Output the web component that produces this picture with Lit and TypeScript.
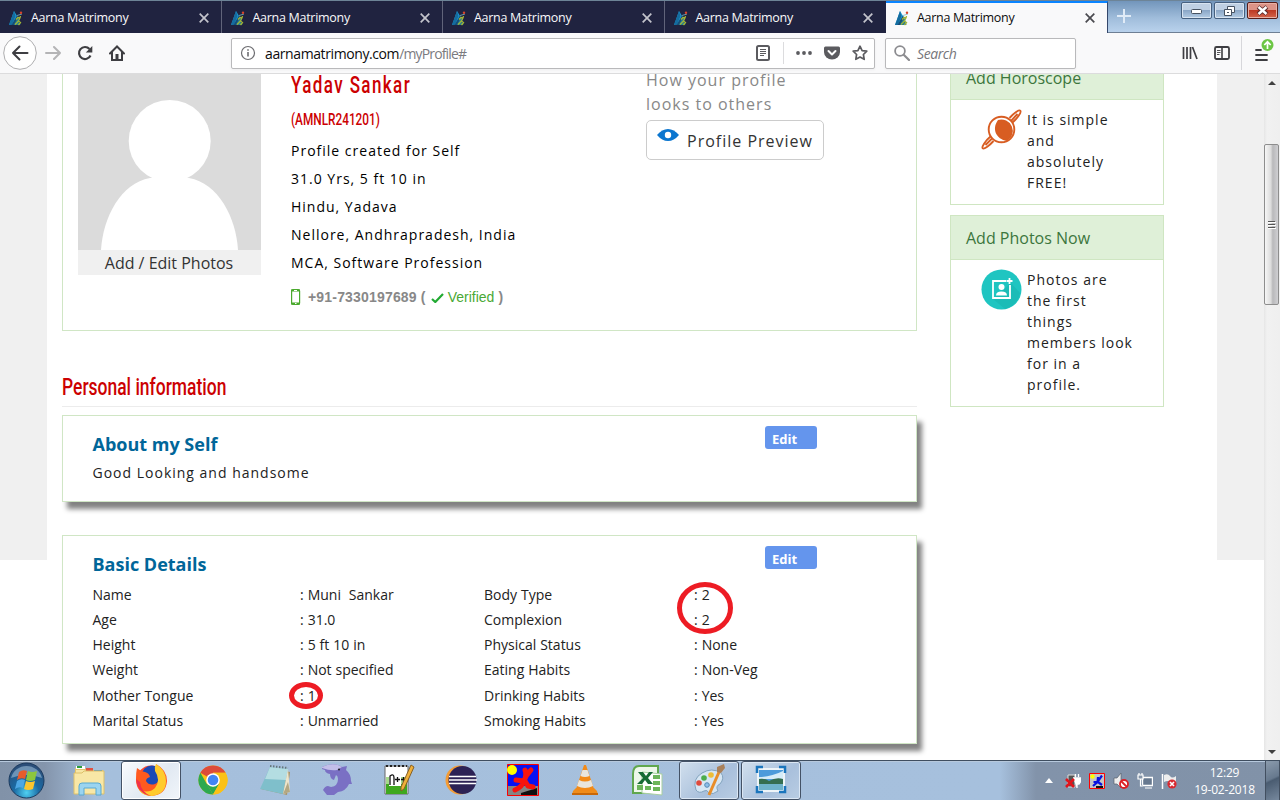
import { LitElement, html, css, svg } from "lit";
import { customElement, property } from "lit/decorators.js";

const logo = html`<svg width="16" height="16" viewBox="0 0 16 16">
  <path d="M6 1 11.500 10 9 15H1z" fill="#1b9ad6"/><path d="M6 1 1 15h3l3.500-9z" fill="#156c9e"/>
  <path d="M3.500 15 9 5.500 12.500 15z" fill="#164d78"/><path d="M6 15 9.500 8l2.500 7z" fill="#2b7f8c"/>
  <path d="M8 9.500 10 7.500l2.500.5M12.500 6Q12 10 7 14.500M10.500 11l2 1.500-2 2.500" stroke="#a2b535" stroke-width="1.300" fill="none"/>
  <path d="M9 5.500 14 4" stroke="#7fb7c0" stroke-width=".8"/>
  <circle cx="13" cy="2.800" r="1.200" fill="#d8442b"/></svg>`;

const sheet = css`
  :host { display: block; box-sizing: border-box; }
  * { box-sizing: border-box; }
  svg { display: block; flex: none; }
`;

@customElement("browser-tabs")
class BrowserTabs extends LitElement {
  static styles = [sheet, css`
    :host { display: flex; height: 33px; border-top: 1px solid #6d8497; background: #202340; font: 12.500px/16px "Open Sans", sans-serif; }
    .tab { width: 221.500px; flex: none; display: flex; align-items: center; padding: 1px 12px 0 8px; border-right: 1px solid #61647a; color: #f9f9fa; }
    .tab.last { border-right-color: #202340; }
    .tab.active { background: #f9f9fa; color: #0c0c0d; border-top: 2px solid #0a84ff; border-right: 1px solid #34476b; padding-top: 0; padding-bottom: 1px; }
    .name { flex: 1; margin-left: 7px; letter-spacing: -0.290px; }
    .aero { flex: 1; display: flex; background: linear-gradient(#7295bb, #a0bddb 55%, #b9d2ec); border-bottom: 1px solid #6e7f94; padding: 1px 2px 0 8px; }
    .plus { margin-top: 6px; margin-right: auto; }
    .win { width: 31px; height: 17px; margin-left: 2px; border: 1px solid #46607f; border-radius: 2px; background: linear-gradient(#bfd0e3 45%, #8ba7c7 50%, #b4cce4); box-shadow: inset 0 0 0 1px #d8e4f1; display: grid; place-items: center; }
    .close { border-color: #571d18; background: linear-gradient(#dc9387 45%, #bd3a24 50%, #d4664c); box-shadow: inset 0 0 0 1px #e9b1a5; }
  `];
  render() {
    return html`${[0, 1, 2, 3, 4].map((i) => html`<div class="tab ${i === 4 ? "active" : i === 3 ? "last" : ""}">
      ${logo}<span class="name">Aarna Matrimony</span>
      <svg width="10" height="10" viewBox="0 0 10 10"><path d="M.7.7 9.300 9.300M9.300.7.7 9.300" stroke=${i === 4 ? "#4a4a4f" : "#c3c4cc"} stroke-width="1.700"/></svg></div>`)}
      <div class="aero">
        <svg class="plus" width="16" height="16" viewBox="0 0 16 16"><path d="M8 1v14M1 8h14" stroke="#e0ebf7" stroke-width="2"/></svg>
        <div class="win"><svg width="13" height="9"><rect x="1.500" y="3.500" width="10" height="4" rx="1" fill="#fff" stroke="#475261"/></svg></div>
        <div class="win"><svg width="14" height="12"><path d="M4.500 1.500h7v6h-7z" fill="#fff" stroke="#475261"/><path d="M1.500 4.500h7v6h-7z" fill="#fff" stroke="#475261"/><path d="M4 7h2v1H4z" fill="#475261"/></svg></div>
        <div class="win close"><svg width="13" height="11"><path d="M2 2l9 7M11 2l-9 7" stroke="#5b2b2b" stroke-width="4.200"/><path d="M2.500 2l8 7M10.500 2l-8 7" stroke="#fff" stroke-width="2.400"/></svg></div>
      </div>`;
  }
}

@customElement("browser-toolbar")
class BrowserToolbar extends LitElement {
  static styles = [sheet, css`
    :host { display: flex; align-items: center; height: 41px; padding: 0 12px 0 3px; background: #f9f9fa; border-bottom: 1px solid #dcdcdd; font: 14px/20px "Open Sans", sans-serif; }
    .nav { display: flex; align-items: center; width: 228px; gap: 8px; }
    .spaced { margin-left: 8px; }
    .field { height: 31px; border: 1px solid #b9b9bb; border-radius: 2px; background: #fff; display: flex; align-items: center; box-shadow: 0 1px 3px #0000000c; }
    .url { width: 644px; padding: 0 6px 0 8px; }
    .addr { margin-left: 9px; flex: 1; color: #7b7b7f; white-space: nowrap; letter-spacing: -0.850px; padding-top: 1px; }
    .addr b { font-weight: 400; color: #0c0c0d; letter-spacing: -0.400px; }
    .line { width: 1px; height: 22px; background: #dcdcde; margin: 0 12px; }
    .search { width: 191px; margin-left: 10px; padding-left: 8px; }
    .search i { margin-left: 7px; color: #76767a; letter-spacing: -0.400px; padding-top: 1px; }
    .right { display: flex; align-items: center; margin-left: auto; }
    .sep { width: 1px; height: 34px; background: #d7d7db; margin: 0 8px 0 11px; }
    .menu { margin: -2px -6px 0 0; }
    .gap { margin-left: 12px; }
    .side { margin-left: 16px; }
  `];
  render() {
    return html`<div class="nav">
      <svg width="34" height="34" viewBox="0 0 34 34"><circle cx="17" cy="17" r="16.300" fill="#fff" stroke="#adadaf"/><path d="M24.500 17H10M16.500 10.500 10 17l6.500 6.500" fill="none" stroke="#3e3e42" stroke-width="2" stroke-linecap="round" stroke-linejoin="round"/></svg>
      <svg width="16" height="16" viewBox="0 0 16 16"><path d="M1 8h14M9 2l6 6-6 6" fill="none" stroke="#b4b4b6" stroke-width="2" stroke-linecap="round" stroke-linejoin="round"/></svg>
      <svg class="spaced" width="16" height="16" viewBox="0 0 16 16"><path d="M13.500 10.500A6 6 0 1 1 12.500 4" fill="none" stroke="#3e3e42" stroke-width="2.200"/><path d="M15.300 1v6.500H8.800z" fill="#3e3e42"/></svg>
      <svg class="spaced" width="16" height="16" viewBox="0 0 16 16"><path d="M1 8.500 8 1.500l7 7M3 7v8h10V7" fill="none" stroke="#3e3e42" stroke-width="2" stroke-linecap="round"/><path d="M6.500 9h3v5h-3z" fill="#3e3e42"/></svg>
    </div>
    <div class="field url">
      <svg width="16" height="16" viewBox="0 0 16 16"><circle cx="8" cy="8" r="6.500" fill="none" stroke="#6c6c70" stroke-width="1.200"/><path d="M8 7v4.500M8 4.200v1.600" stroke="#6c6c70" stroke-width="1.600"/></svg>
      <span class="addr"><b>aarnamatrimony.com</b>/myProfile#</span>
      <svg width="16" height="16" viewBox="0 0 16 16"><rect x="2" y="1" width="12" height="14" rx="1.500" fill="none" stroke="#5b5b5f" stroke-width="2"/><path d="M5 4.500h6M5 6.500h6M5 8.500h6M5 10.500h4" stroke="#5b5b5f"/></svg>
      <span class="line"></span>
      <svg width="16" height="16" viewBox="0 0 16 16"><g fill="#5b5b5f"><circle cx="2" cy="8" r="1.900"/><circle cx="8" cy="8" r="1.900"/><circle cx="14" cy="8" r="1.900"/></g></svg>
      <svg class="gap" width="16" height="16" viewBox="0 0 16 16"><path d="M1.500 1.500h13Q16 1.500 16 3v4a8 7.500 0 0 1-16 0V3Q0 1.500 1.500 1.500z" fill="#5b5b5f"/><path d="M4.500 6 8 9.500 11.500 6" fill="none" stroke="#fff" stroke-width="2" stroke-linecap="round" stroke-linejoin="round"/></svg>
      <svg class="gap" width="16" height="16" viewBox="0 0 16 16"><path d="M8 1.200l2.100 4.400 4.700.6-3.400 3.300.8 4.800L8 12l-4.200 2.300.8-4.800L1.200 6.200l4.700-.6z" fill="none" stroke="#5b5b5f" stroke-width="1.700" stroke-linejoin="round"/></svg>
    </div>
    <div class="field search">
      <svg width="16" height="16" viewBox="0 0 16 16"><circle cx="6" cy="6" r="4.900" fill="none" stroke="#8c8c90" stroke-width="1.800"/><path d="M9.700 9.700 15 15" stroke="#8c8c90" stroke-width="2.200" stroke-linecap="round"/></svg><i>Search</i></div>
    <div class="right">
      <svg width="16" height="16" viewBox="0 0 16 16"><path d="M1.500 2v12M5 2v12M8.500 2v12M10.500 2 15 14" stroke="#3e3e42" stroke-width="1.700"/></svg>
      <svg class="side" width="16" height="16" viewBox="0 0 16 16"><rect x="1" y="2" width="14" height="12" rx="1.500" fill="none" stroke="#3e3e42" stroke-width="1.800"/><path d="M8 2v12" stroke="#3e3e42" stroke-width="1.600"/><path d="M3 5.500h3.500M3 7.500h3.500M3 9.500h2.500" stroke="#3e3e42" stroke-width=".9"/></svg>
      <span class="sep"></span>
      <svg class="menu" width="24" height="26" viewBox="0 0 24 26"><path d="M6 11h5M6 16h11M6 21h11" stroke="#3e3e42" stroke-width="1.800" stroke-linecap="round"/><circle cx="17.500" cy="6" r="6" fill="#6cc644"/><path d="M17.500 10V3M14.300 6l3.200-3.200L20.700 6" stroke="#fff" stroke-width="1.700" fill="none"/></svg>
    </div>`;
  }
}

@customElement("side-panel")
class SidePanel extends LitElement {
  @property() heading = "";
  static styles = [sheet, css`
    :host { display: block; width: 214px; border: 1px solid #cfe6c2; background: #fff; margin-bottom: 10px; }
    :host([cut]) { border-top: 0; }
    .head { display: flow-root; height: 44px; padding: 11px 15px; background: #dff0d8; border-bottom: 1px solid #cfe6c2; color: #3c763d; font: 16px/22px "Open Sans", sans-serif; white-space: nowrap; }
    :host([cut]) .head { height: 26px; padding-top: 0; }
    :host([cut]) .head span { display: block; margin-top: -7px; }
    .body { display: flex; padding: 9px 16px 11px 30px; gap: 5px; font: 14px/21px "Open Sans", sans-serif; letter-spacing: 1px; color: #222; }
    .text { white-space: nowrap; }
  `];
  render() {
    return html`<div class="head"><span>${this.heading}</span></div><div class="body"><slot name="icon"></slot><div class="text"><slot></slot></div></div>`;
  }
}

const left = [["Name", "Muni\u00a0 Sankar"], ["Age", "31.0"], ["Height", "5 ft 10 in"], ["Weight", "Not specified"], ["Mother Tongue", "1"], ["Marital Status", "Unmarried"]];
const right = [["Body Type", "2"], ["Complexion", "2"], ["Physical Status", "None"], ["Eating Habits", "Non-Veg"], ["Drinking Habits", "Yes"], ["Smoking Habits", "Yes"]];

@customElement("profile-page")
class ProfilePage extends LitElement {
  static styles = [sheet, css`
    :host { display: flex; height: 686px; overflow: hidden; background: #fff; font: 14px/21px "Open Sans", sans-serif; color: #222; position: relative; }
    .gutter { width: 47px; height: 486px; background: #f0f0f0; flex: none; }
    .content { width: 1170px; padding-left: 15px; display: flex; gap: 33px; flex: none; }
    .main { width: 855px; }
    .card { border: 1px solid #d0e6c5; background: #fff; }
    .profile { height: 257px; border-top: 0; display: flex; padding-left: 15px; }
    .photo { width: 183px; flex: none; }
    .photo div { height: 25px; background: #f0f0f0; text-align: center; font-size: 16px; line-height: 26px; color: #333; padding-right: 1px; }
    .info { width: 385px; flex: none; padding-left: 30px; color: #000; letter-spacing: 1px; line-height: 28px; white-space: nowrap; }
    .narrow { font-family: Roboto, sans-serif; color: #cc0001; transform-origin: 0 0; display: block; width: max-content; letter-spacing: 0; font-weight: 500; }
    .name { font-size: 24.500px; line-height: 28px; margin-top: -3px; letter-spacing: 2px; transform: scaleX(.695); }
    .id { font-size: 17px; line-height: 20px; margin: 10px 0 8px; transform: scaleX(.695); }
    .phone { display: flex; align-items: center; font: bold 14px/20px "Liberation Sans", sans-serif; letter-spacing: 0.180px; color: #888; margin-top: 10px; }
    .phone svg:first-child { margin-right: 7px; }
    .phone em { font-style: normal; font-weight: 400; color: #4aa935; margin: 0 4px; letter-spacing: 0; }
    .tick { margin-left: 5px; }
    .look { font-size: 16px; line-height: 24px; letter-spacing: 1px; color: #888; width: 178px; margin-top: -6px; white-space: nowrap; flex: none; }
    .btn { height: 40px; margin-top: 4px; border: 1px solid #ccc; border-radius: 5px; display: flex; color: #333; padding: 8px 0 0 10px; gap: 8px; }
    .title { font-size: 24.500px; line-height: 30px; margin-top: 41px; transform: scaleX(.713); }
    .rule { height: 1px; background: #ececec; margin: 4px 0 8px; }
    .shade { box-shadow: 5px 7px 5px #828282; padding: 15px 99px 0 29.500px; }
    .about { height: 87px; margin-bottom: 33px; }
    .details { height: 209px; }
    .top { display: flex; justify-content: space-between; height: 31px; }
    h2 { margin: 0; font: bold 18px/27px "Open Sans", sans-serif; color: #006699; }
    .edit { width: 52px; height: 23px; margin-top: -5px; border-radius: 3px; background: #6495ed; color: #fff; font: bold 13px/26px "Open Sans", sans-serif; padding-left: 7px; }
    .about p { margin: 0; letter-spacing: 1px; }
    .grid { display: grid; grid-template-columns: 207.500px 184px 210px 1fr; grid-auto-rows: 25.140px; line-height: 25px; white-space: pre; word-spacing: 0.300px; }
    .side { width: 214px; }
    .scroll { width: 16px; height: 686px; background: linear-gradient(90deg, #e6e6e6, #f1f1f1 3px, #efefef); display: flex; flex-direction: column; align-items: center; padding: 7px 0 6px; flex: none; }
    .thumb { width: 15px; height: 161px; margin: 59px 1px auto 0; border: 1px solid #8d8d8d; border-radius: 2px; background: linear-gradient(90deg, #f6f6f6, #dcdcdc 45%, #b9b9bb 60%, #cfcfd2); display: grid; place-items: center; }
    .ring { position: absolute; }
    .r1 { left: 676px; top: 507px; }
    .r2 { left: 288px; top: 607px; }
  `];
  render() {
    return html`<div class="gutter"></div>
    <div class="content"><div class="main">
      <section class="card profile">
        <div class="photo"><svg width="183" height="176" viewBox="0 0 183 176"><path d="M0 0h183v176H0z" fill="#dbdbdb"/><circle cx="91.700" cy="67" r="41" fill="#fff"/><path d="M23 176C25 143 43 109 72 104h39c29 5 47 39 49 72z" fill="#fff"/></svg><div>Add / Edit Photos</div></div>
        <div class="info"><span class="narrow name">Yadav Sankar</span><span class="narrow id">(AMNLR241201)</span>
          <div>Profile created for Self</div><div>31.0 Yrs, 5 ft 10 in</div><div>Hindu, Yadava</div><div>Nellore, Andhrapradesh, India</div><div>MCA, Software Profession</div>
          <div class="phone"><svg width="10" height="16" viewBox="0 0 10 16"><rect x=".6" y=".6" width="8" height="14.800" rx="1.300" fill="none" stroke="#4aa92d" stroke-width="1.200"/><path d="M0 1.500h9M0 14.500h9" stroke="#4aa92d" stroke-width="1.800"/><path d="M3 1.500h3M4 14.500h1.500" stroke="#fff"/></svg>
          <span>+91-7330197689 (</span><svg class="tick" width="13" height="11" viewBox="0 0 13 11"><path d="M1 7l3.300 3L12 2" fill="none" stroke="#22aa33" stroke-width="2.200"/></svg><em>Verified</em>)</div>
        </div>
        <div class="look">How your profile<br>looks to others
          <div class="btn"><svg width="22" height="12" viewBox="0 0 22 12"><path d="M0 6Q5 0 11 0t11 6q-5 6-11 6T0 6z" fill="#0b76cf"/><circle cx="11" cy="6" r="3.200" fill="#fff"/></svg>Profile Preview</div></div>
      </section>
      <span class="narrow title">Personal information</span><div class="rule"></div>
      <section class="card shade about"><div class="top"><h2>About my Self</h2><div class="edit">Edit</div></div><p>Good Looking and handsome</p></section>
      <section class="card shade details"><div class="top"><h2>Basic Details</h2><div class="edit">Edit</div></div>
        <div class="grid">${left.map((l, i) => html`<span>${l[0]}</span><span>: ${l[1]}</span><span>${right[i][0]}</span><span>: ${right[i][1]}</span>`)}</div></section>
    </div>
    <div class="side">
      <side-panel cut heading="Add Horoscope"><svg slot="icon" width="41" height="41" viewBox="0 0 41 41"><g fill="none" stroke="#d85d22" stroke-width="1.900"><circle cx="20.500" cy="20.500" r="12.800"/><path d="M28.500 9C33 4 38 .5 39.300 1.700S37 9 31.500 13.500M36.500 5 30 12M12.500 32C8 37 3 40.500 1.700 39.300S4 32 9.500 27.500M4.500 36 11 29.500"/></g><path d="M17 11a11.500 11.500 0 0 1 9 21C15 30 10.500 20 17 11z" fill="#d85d22"/></svg>It is simple<br>and<br>absolutely<br>FREE!</side-panel>
      <side-panel heading="Add Photos Now"><svg slot="icon" width="41" height="41" viewBox="0 0 41 41"><circle cx="20.500" cy="20.500" r="20" fill="#1fc5c1"/><path d="M30 14l9 10a20 20 0 0 1-15 16L12 30z" fill="#1bbcb7"/><path d="M25 12H12v17h17V16" fill="none" stroke="#fff" stroke-width="1.800"/><path d="M28.500 9v6M25.500 12h6" stroke="#fff" stroke-width="1.800"/><circle cx="20.500" cy="18" r="3" fill="#fff"/><path d="M15 26.500q0-4 5.500-4t5.500 4z" fill="#fff"/></svg>Photos are<br>the first<br>things<br>members look<br>for in a<br>profile.</side-panel>
    </div></div>
    <div class="gutter"></div>
    <div class="scroll"><svg width="8" height="4"><path d="M0 4 4 0l4 4z" fill="#404040"/></svg>
      <div class="thumb"><svg width="8" height="9"><path d="M0 1.500h7M0 4.500h7M0 7.500h7" stroke="#555"/><path d="M0 2.500h8M0 5.500h8M0 8.500h8" stroke="#fff"/></svg></div>
      <svg width="8" height="4"><path d="M0 0h8L4 4z" fill="#404040"/></svg></div>
    <svg class="ring r1" width="58" height="54"><ellipse cx="29" cy="27" rx="25.500" ry="23.500" fill="none" stroke="#ed1c24" stroke-width="5"/></svg>
    <svg class="ring r2" width="36" height="30"><ellipse cx="18" cy="14.500" rx="14.500" ry="11" fill="none" stroke="#ed1c24" stroke-width="5"/></svg>`;
  }
}

const apps = [
  svg`<path d="M2 4h10l2 2h16v24H2z" fill="#e3c46c"/><path d="M3 6h9l2 3h14v20H3z" fill="#f7e6a3"/><path d="M3 2h9v3H3z" fill="#fff"/><path d="M4 2h5v2H4z" fill="#2a9d3c"/><path d="M13 4h7v3h-7z" fill="#e05040"/><path d="M21 6h8v2h-8z" fill="#3b8fd8"/><path d="M1 9h8l2-2h20v23H1z" fill="#f8e7a6" stroke="#dcc06a"/><path d="M6 31V22q0-3 3-3h16q3 0 3 3v9h-5v-7H11v7z" fill="#9bd4ef" stroke="#58a9d2"/>`,
  svg`<circle cx="16" cy="16" r="14.500" fill="#ff4a2d"/><circle cx="17" cy="12" r="10.500" fill="#1c49b5"/><path d="M2 4Q5 7 10 8q4 1 5 5-4 1-4 4 3 5 9 3 5-2 5-8L21 0q11 6 11 17-1 14-16 15Q1 30 1 15 1 8 2 4z" fill="#ff5a1f"/><path d="M21 0q10 6 10 17 0 13-14 15-9 0-13-6 10 4 16-2 6-8 0-17-1-4 1-7z" fill="#ffcb2e"/><path d="M1 15Q3 30 16 32q-10-4-11-14z" fill="#f0304a"/>`,
  svg`<circle cx="16" cy="16" r="14.500" fill="#fbc116"/><path d="M16 16 3.400 8.700A14.500 14.500 0 0 1 28.600 8.700H16z" fill="#dd4b39"/><path d="M3.400 8.700 9.800 20 16 30.500A14.500 14.500 0 0 1 3.400 8.700z" fill="#2da94f"/><path d="m9.500 20 6.500 2.500 6-2.500-6 10.500z" fill="#2da94f"/><path d="M22.500 19.500 16 30.500A14.500 14.500 0 0 0 28.600 8.700H16z" fill="#fbc116"/><circle cx="16" cy="16" r="6.800" fill="#fff"/><circle cx="16" cy="16" r="5.300" fill="#4285f4"/>`,
  svg`<path d="M12 4 31 8l-3 23L2 25z" fill="#a89468"/><path d="M11 3 29 5l-5 25L1 25z" fill="#7fbfcb"/><path d="M11 3 29 5l-2 11-21-1z" fill="#b4dde2"/><path d="m29 5 2 23-7 2z" fill="#ece5cd"/><path d="m24 30 5-12 2 10z" fill="#b3a883"/><path d="m11 2 18 2" stroke="#66777c" stroke-width="2" stroke-dasharray="1.500 1.500"/>`,
  svg`<path d="M1 3Q9-1 17 1q3 1 4 2l5-1-1 4q5 4 5 11l1 3h-3q-3 7-11 8l-4 3-7 0-4-5q2-4 5-4l3 1q7-1 7-8 0-3-2-4l-2 5q-4-1-4-6Q4 9 4 6L1 5z" fill="#7a70c4"/><path d="M1 3Q9-1 17 1l4 2-5 3Q9 7 1 4z" fill="#c3bfe9"/><circle cx="18" cy="5.500" r="1" fill="#222"/>`,
  svg`<path d="M2 2h23v28H2z" fill="#fff" stroke="#666"/><path d="M3 13h21v17H3z" fill="#a6d98b"/><path d="M3 20h21v10H3z" fill="#3fa81f"/><path d="M3 2h21" stroke="#222" stroke-width="2" stroke-dasharray="2 2"/><path d="M6 10h12v12H6z" fill="#fff"/><path d="M7 21v-9q4-3 4 2v7M12 15.500h5M14.500 13v5M18 15.500h5M20.500 13v5" stroke="#111" stroke-width="1.300" fill="none"/><path d="M28 1l3 2-10 22-3 2v-4z" fill="#f0b03a" stroke="#865f24"/>`,
  svg`<circle cx="15" cy="16" r="14.500" fill="#f49c35"/><circle cx="17.500" cy="16" r="14" fill="#2c2255"/><path d="M4 12.500h27M4 16h28M4 19.500h27" stroke="#fff" stroke-width="1.700"/>`,
  svg`<path d="M.5.5h31v31H.5z" fill="#0712f3" stroke="#f00"/><path d="M1 22h30v9H1z" fill="#858585"/><path d="M14 29l16-5v7H14z" fill="#111"/><circle cx="5" cy="6" r="5" fill="#ff0"/><path d="M24 6Q19 11 17 17t-9 9M18 6q2 5-1 11l-8-1M18 17l3 5 5 1" fill="none" stroke="#f8130d" stroke-width="5" stroke-linecap="round" stroke-linejoin="round"/>`,
  svg`<path d="m7 24h18l3 3 1 4H3l1-4z" fill="#f08d1b"/><path d="M3 29h26v2H3z" fill="#c96808"/><path d="M15 1h2l8 24q-9 5-18 0z" fill="#f28a18"/><path d="m13.500 6-2 6q4.500 2 9 0l-2-6zM10 16l-2 6q8 4 16 0l-2-6q-6 3-12 0z" fill="#e9e5dc"/>`,
  svg`<path d="M8 2h19v27H2V10q0-8 6-8z" fill="#edf7e9" stroke="#60a74e" stroke-width="2"/><path d="m11 8 20 2v21l-20-2z" fill="#fff" stroke="#a7cfa0"/><path d="M22 11h7v4h-7zM22 17h7v4h-7zM22 23h7v4h-7zM14 22h6v4h-6zM6 21h6v5H6z" fill="#6db55b"/><path d="M7 8h5l3 4 3-4h4l-5 6 5 6h-5l-3-4-3 4H6l6-6z" fill="#176b34"/>`,
  svg`<path d="M3 26Q-1 15 9 9t19 0q4 5-1 11-5 2-2 7-5 4-9 2-2-4-5-2-5 3-8-1z" fill="#d6e6f3" stroke="#82a3be"/><circle cx="6" cy="19" r="2.800" fill="#df4a3c"/><circle cx="11" cy="14" r="2.800" fill="#4cad4c"/><circle cx="18" cy="11" r="2.800" fill="#edbd36"/><circle cx="14" cy="21" r="2.300" fill="#8dbfe8" stroke="#5588b5"/><path d="M26 8 16 31" stroke="#e88d29" stroke-width="3"/><path d="m24 8 0-5 7-3 1 4-4 5z" fill="#a9815b"/>`,
  svg`<path d="M2 4h28v24H2z" fill="#eef4f8"/><path d="M4 6h24v20H4z" fill="#4c9bdb"/><path d="M4 13q12 0 24-6v8H4z" fill="#d5ecf8"/><path d="M4 15q6-1 10 2 7-4 14-2v5H4z" fill="#356e50"/><path d="M4 20h24v6H4z" fill="#6fb3cb"/><path d="M2 9V3h6M24 3h6v6M30 22v6h-6M8 28H2v-6" fill="none" stroke="#1b75bc" stroke-width="2.500"/>`,
];

const tray = [
  svg`<path d="M3 2h7v12H3z" fill="#555" stroke="#ddd"/><path d="M10.500 1v3M13.500 1v3M8 5h8v3l-2 3h-2v4" stroke="#fff" fill="#fff" stroke-width="1.300"/><path d="m1 6 8 8M9 6l-8 8" stroke="#e1141b" stroke-width="2.600"/>`,
  svg`<path d="M.5.5h15v15H.5z" fill="#c6c6c6" stroke="#f00"/><circle cx="3.500" cy="3.500" r="2.200" fill="#ff0"/><path d="M7 13h7v2H7z" fill="#111"/><path d="M13 2.500 8.500 9 4 13M9 4l-.5 5H4.500M9 9l4 3" fill="none" stroke="#0712e0" stroke-width="2.200"/>`,
  svg`<path d="M1 5h3l4-5v15l-4-4H1z" fill="#eee" stroke="#59636f" stroke-width=".7"/><circle cx="11" cy="11" r="4" fill="#fff" stroke="#dc1f26" stroke-width="1.800"/><path d="m8 8 6 6" stroke="#dc1f26" stroke-width="1.800"/>`,
  svg`<path d="M5.500 4.500h10v8h-10z" fill="#66788f" stroke="#fff" stroke-width="1.400"/><path d="M1 2h5v4H1zM3.500 6v7h2M8 15h7M2 0v2M5 0v2" fill="#8494a8" stroke="#fff" stroke-width="1.200"/>`,
  svg`<path d="M1.500 1v15" stroke="#fff" stroke-width="1.500"/><path d="M3 2q4-2 6 1t6 0v7q-4 1-6-1t-6 0z" fill="#eee"/><circle cx="11" cy="11" r="4.600" fill="#d82a31"/><path d="m9 9 4 4M13 9l-4 4" stroke="#fff" stroke-width="1.600"/>`,
];

@customElement("task-bar")
class TaskBar extends LitElement {
  static styles = [sheet, css`
    :host { display: flex; height: 40px; border-top: 1px solid #3f4e60; box-shadow: inset 0 1px #b7c9dd; background: linear-gradient(90deg, #8192a8 0, #8495ac 45px, #a5bfdc 95px, #a6c0dd 1000px, #8293aa 1036px, #8192a8); }
    .start { width: 57px; padding: 1px 0 0 8px; }
    .app { width: 62px; display: grid; place-items: center; padding: 0 2px; }
    .cell { width: 60px; height: 39px; display: grid; place-items: center; padding-bottom: 1px; }
    .open .cell { border: 1px solid #445266; border-radius: 3px; box-shadow: inset 0 0 0 1px #dbe7f4; background: linear-gradient(135deg, #d1dfed, #a9c0dc 60%, #b9cde3); }
    .hot .cell { background: linear-gradient(135deg, #f9fbfd, #e1e9f2 55%, #f1f5fa); box-shadow: inset 0 0 0 1px #fff; }
    .tray { margin-left: auto; display: flex; align-items: center; gap: 8px; }
    .more { margin-right: 4px; }
    .clock { width: 79px; text-align: center; color: #fff; font: 12px/17px "Open Sans", sans-serif; letter-spacing: -0.200px; margin: 0 1px 0 0; }
    .desk { width: 15px; border: 1px solid #424f60; border-width: 0 1px; background: linear-gradient(155deg, #8b9bad, #67798e 45%, #4a5c71 50%, #76889d); }
  `];
  render() {
    return html`<div class="start"><svg width="37" height="37" viewBox="0 0 37 37"><defs><radialGradient id="orb" cx=".5" cy=".85" r=".8"><stop offset="0" stop-color="#4fd0f2"/><stop offset=".45" stop-color="#1a6aa3"/><stop offset="1" stop-color="#2b4d78"/></radialGradient></defs><circle cx="18.500" cy="18.500" r="17.500" fill="url(#orb)" stroke="#1c3b5f"/><path d="M3 16A16 16 0 0 1 34 16Q18 10 3 16z" fill="#a8c4dc" opacity=".55"/><path d="M11 10q4-3 8-1l-2 8q-4-2-8 1z" fill="#e65c2c"/><path d="M20 9q4 2 9 0l-2 9q-5 2-9 0z" fill="#8cc63e"/><path d="M9 19q4-3 8-1l-2 8q-4-2-8 1z" fill="#4da7e4"/><path d="M18 19q4 2 9 0l-2 8q-5 2-9 0z" fill="#fbc52e"/></svg></div>
    ${apps.map((a, i) => html`<div class="app ${i === 1 ? "open hot" : i > 9 ? "open" : ""}"><div class="cell"><svg width="32" height="32" viewBox="0 0 32 32">${a}</svg></div></div>`)}
    <div class="tray"><svg class="more" width="8" height="5" viewBox="0 0 8 5"><path d="M0 5 4 0l4 5z" fill="#fff"/></svg>
      ${tray.map((t) => html`<svg width="16" height="16" viewBox="0 0 16 16">${t}</svg>`)}
      <div class="clock">12:29<br>19-02-2018</div></div><div class="desk"></div>`;
  }
}

@customElement("app-root")
class AppRoot extends LitElement {
  static styles = css`:host { display: flex; flex-direction: column; width: 1280px; height: 800px; overflow: hidden; }`;
  render() {
    return html`<browser-tabs></browser-tabs><browser-toolbar></browser-toolbar><profile-page></profile-page><task-bar></task-bar>`;
  }
}
